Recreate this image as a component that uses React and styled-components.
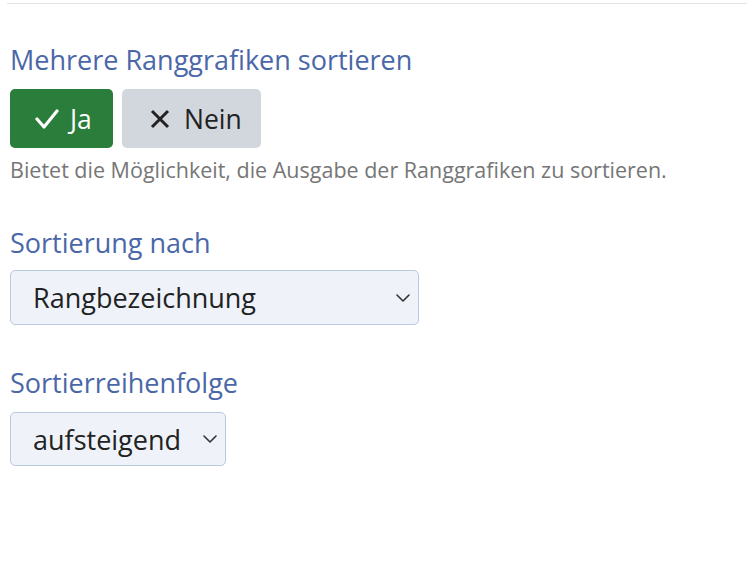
import React from 'react';
import styled, { createGlobalStyle } from 'styled-components';

const GlobalStyle = createGlobalStyle`
  html, body {
    margin: 0;
    padding: 0;
    background: #fff;
    font-family: 'Open Sans', 'Liberation Sans', sans-serif;
  }
`;

const Page = styled.div`
  padding: 0 0 0 10px;
`;

const Divider = styled.div`
  height: 1px;
  background: #e2e2e2;
  margin: 3px 0 0 -3px;
`;

const Field = styled.div`
  display: flex;
  flex-direction: column;
  align-items: flex-start;
  margin-top: ${p => p.$top}px;
`;

const Label = styled.div`
  font-size: 27px;
  line-height: 36px;
  color: #4a67a8;
  margin-bottom: ${p => p.$gap}px;
`;

const Toggle = styled.div`
  display: flex;
  gap: 9px;
`;

const ToggleButton = styled.button`
  display: flex;
  align-items: center;
  gap: ${p => p.$gap}px;
  box-sizing: border-box;
  width: ${p => p.$w}px;
  height: 59px;
  padding: 0 0 0 ${p => p.$pl}px;
  border: none;
  border-radius: 5px;
  font-family: inherit;
  font-size: 26.5px;
  background: ${p => (p.$active ? '#2a7d3a' : '#d2d7de')};
  color: ${p => (p.$active ? '#fff' : '#222')};
`;

const Help = styled.div`
  font-size: 21.5px;
  line-height: 28px;
  color: #767676;
  margin-top: 8px;
`;

const Select = styled.div`
  display: flex;
  align-items: center;
  justify-content: space-between;
  box-sizing: border-box;
  width: ${p => p.$w}px;
  height: ${p => p.$h}px;
  padding: 0 6px 0 22px;
  background: #eff3f9;
  border: 1px solid #b9c9e0;
  border-radius: 5px;
  font-size: 27px;
  color: #222;
`;

const Check = () => (
  <svg width="24" height="20" viewBox="0 0 24 20" fill="none" stroke="currentColor" strokeWidth="3.2" strokeLinecap="round" strokeLinejoin="round">
    <path d="M2 10l7 8L22 2" />
  </svg>
);

const Cross = () => (
  <svg width="20" height="20" viewBox="0 0 20 20" fill="none" stroke="currentColor" strokeWidth="3">
    <path d="M2 2l16 16M18 2L2 18" />
  </svg>
);

const Chevron = () => (
  <svg width="18" height="10" viewBox="0 0 18 10" fill="none" stroke="#333" strokeWidth="1.6" strokeLinecap="round" strokeLinejoin="round">
    <path d="M3 2l6 6 6-6" />
  </svg>
);

export default function App() {
  return (
    <>
      <GlobalStyle />
      <Page>
        <Divider />
        <Field $top={38}>
          <Label $gap={11}>Mehrere Ranggrafiken sortieren</Label>
          <Toggle>
            <ToggleButton $active $w={103} $pl={25} $gap={11}><Check />Ja</ToggleButton>
            <ToggleButton $w={139} $pl={28} $gap={14}><Cross />Nein</ToggleButton>
          </Toggle>
          <Help>Bietet die Möglichkeit, die Ausgabe der Ranggrafiken zu sortieren.</Help>
        </Field>
        <Field $top={41}>
          <Label $gap={9}>Sortierung nach</Label>
          <Select $w={409} $h={55}>Rangbezeichnung<Chevron /></Select>
        </Field>
        <Field $top={40}>
          <Label $gap={11}>Sortierreihenfolge</Label>
          <Select $w={216} $h={54}>aufsteigend<Chevron /></Select>
        </Field>
      </Page>
    </>
  );
}
